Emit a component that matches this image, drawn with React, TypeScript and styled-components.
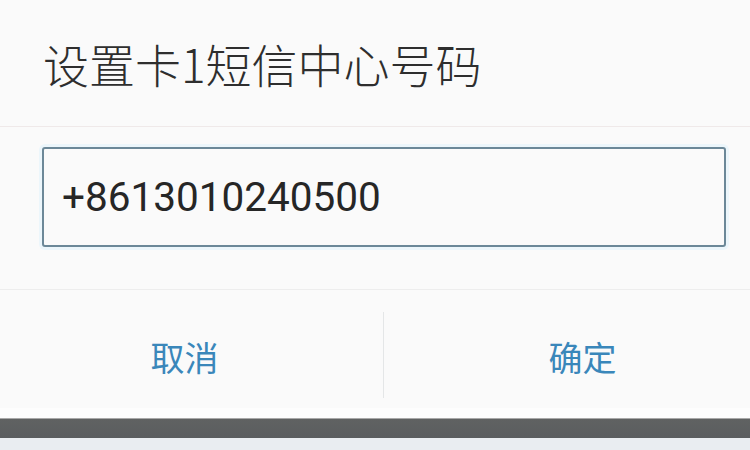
import React from "react";
import styled, { createGlobalStyle } from "styled-components";

const Global = createGlobalStyle`
  html, body { margin: 0; padding: 0; background: #fafafa; }
  body { width: 750px; height: 450px; overflow: hidden; }
`;

const Page = styled.div`
  width: 750px;
  height: 450px;
  display: flex;
  flex-direction: column;
  background: #fafafa;
  font-family: "Noto Sans CJK SC", "Noto Sans", sans-serif;
`;

const Header = styled.div`
  height: 126px;
  display: flex;
  align-items: center;
  padding-left: 43px;
  border-bottom: 1px solid #efe9e9;
  box-sizing: content-box;
`;

const Title = styled.h1`
  margin: 0;
  font-size: 46px;
  line-height: 1;
  font-weight: 300;
  color: #2e2e2e;
  font-family: "Noto Sans CJK SC", "Noto Sans", sans-serif;
`;

const Body = styled.div`
  padding: 20px 24px 42px 42px;
  border-bottom: 1px solid #ededed;
`;

const Field = styled.div`
  height: 100px;
  box-sizing: border-box;
  border: 2px solid #6c8898;
  border-radius: 3px;
  box-shadow: 0 0 0 3px #ecf6fb;
  background: #fafafa;
  display: flex;
  align-items: center;
  padding-left: 18px;
`;

const Value = styled.span`
  font-family: Roboto, "Noto Sans", sans-serif;
  font-size: 40.5px;
  color: #262626;
  line-height: 1;
`;

const Actions = styled.div`
  height: 118px;
  display: grid;
  grid-template-columns: 383px 1px 1fr;
  align-items: center;
`;

const ActionButton = styled.div<{ $shift: number }>`
  height: 100%;
  display: flex;
  align-items: center;
  justify-content: center;
  box-sizing: border-box;
  padding-top: 14px;
  padding-left: ${(p) => (p.$shift > 0 ? p.$shift : 0)}px;
  padding-right: ${(p) => (p.$shift < 0 ? -p.$shift : 0)}px;
  font-size: 34px;
  color: #3a87ba;
  font-family: "Noto Sans CJK SC", "Noto Sans", sans-serif;
`;

const Separator = styled.div`
  align-self: start;
  margin-top: 22px;
  height: 86px;
  background: #e4e6e7;
`;

const Gap = styled.div`
  height: 10px;
  background: #fdfdfd;
`;

const DarkBar = styled.div`
  height: 19px;
  border-top: 1px solid #a8a8a8;
  background: linear-gradient(#606262, #5a5d5f);
`;

const Footer = styled.div`
  flex: 1;
  background: #e9edf1;
`;

export default function App() {
  return (
    <Page>
      <Global />
      <Header>
        <Title>设置卡1短信中心号码</Title>
      </Header>
      <Body>
        <Field>
          <Value>+8613010240500</Value>
        </Field>
      </Body>
      <Actions>
        <ActionButton $shift={-14}>取消</ActionButton>
        <Separator />
        <ActionButton $shift={31}>确定</ActionButton>
      </Actions>
      <Gap />
      <DarkBar />
      <Footer />
    </Page>
  );
}
